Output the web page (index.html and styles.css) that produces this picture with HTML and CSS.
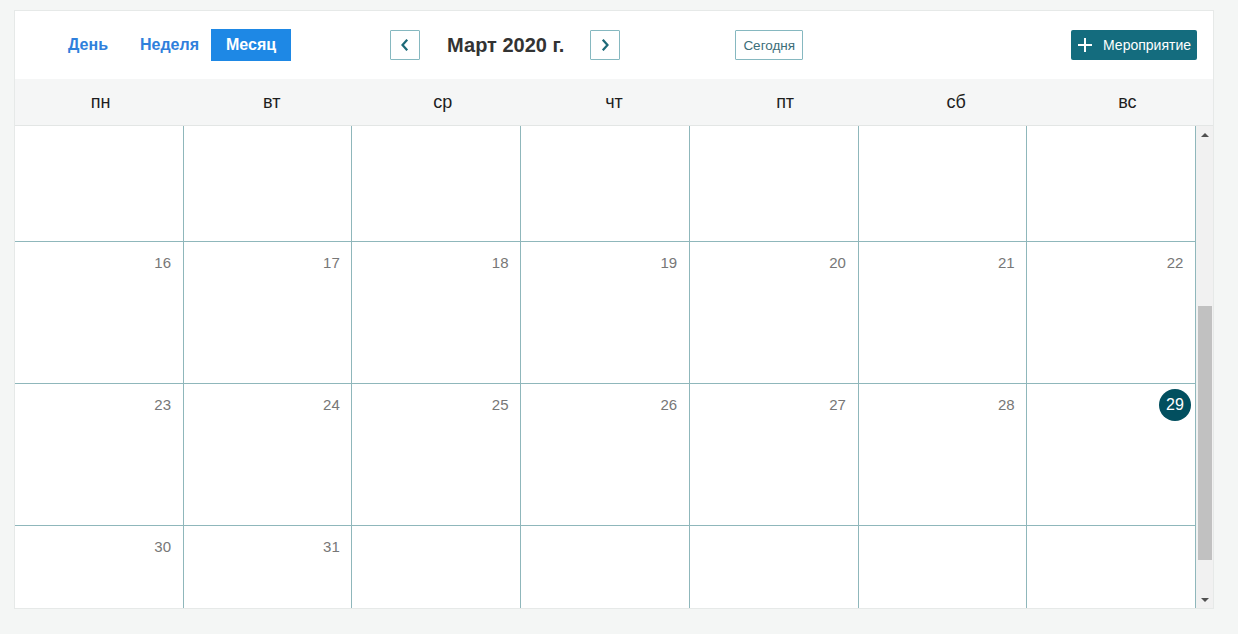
FILE: index.html
```html
<!DOCTYPE html>
<html lang="ru">
<head>
<meta charset="utf-8">
<title>Календарь</title>
<link rel="stylesheet" href="styles.css">
</head>
<body>
<div class="calendar">
  <div class="toolbar">
    <div class="views">
      <a class="view">День</a>
      <a class="view view-week">Неделя</a>
      <a class="view active">Месяц</a>
    </div>
    <div class="nav">
      <button class="nav-btn" aria-label="Назад">
        <svg width="12" height="12" viewBox="0 0 12 12"><path d="M7.5 1.5 L3.5 6 L7.5 10.5" fill="none" stroke="#1d6a78" stroke-width="2.2" stroke-linecap="square"/></svg>
      </button>
      <h2 class="title">Март 2020 г.</h2>
      <button class="nav-btn" aria-label="Вперёд">
        <svg width="12" height="12" viewBox="0 0 12 12"><path d="M4.5 1.5 L8.5 6 L4.5 10.5" fill="none" stroke="#1d6a78" stroke-width="2.2" stroke-linecap="square"/></svg>
      </button>
    </div>
    <button class="today-btn">Сегодня</button>
    <button class="add-btn">
      <svg width="14" height="14" viewBox="0 0 14 14"><path d="M7 0 V14 M0 7 H14" stroke="#fff" stroke-width="2"/></svg>
      <span>Мероприятие</span>
    </button>
  </div>
  <div class="weekdays">
    <div>пн</div><div>вт</div><div>ср</div><div>чт</div><div>пт</div><div>сб</div><div>вс</div>
  </div>
  <div class="body">
    <div class="weeks" id="weeks">
      <div class="week">
        <div class="day"></div><div class="day"></div><div class="day"></div><div class="day"></div><div class="day"></div><div class="day"></div><div class="day"><span class="num">1</span></div>
      </div>
      <div class="week">
        <div class="day"><span class="num">2</span></div><div class="day"><span class="num">3</span></div><div class="day"><span class="num">4</span></div><div class="day"><span class="num">5</span></div><div class="day"><span class="num">6</span></div><div class="day"><span class="num">7</span></div><div class="day"><span class="num">8</span></div>
      </div>
      <div class="week">
        <div class="day"><span class="num">9</span></div><div class="day"><span class="num">10</span></div><div class="day"><span class="num">11</span></div><div class="day"><span class="num">12</span></div><div class="day"><span class="num">13</span></div><div class="day"><span class="num">14</span></div><div class="day"><span class="num">15</span></div>
      </div>
      <div class="week">
        <div class="day"><span class="num">16</span></div><div class="day"><span class="num">17</span></div><div class="day"><span class="num">18</span></div><div class="day"><span class="num">19</span></div><div class="day"><span class="num">20</span></div><div class="day"><span class="num">21</span></div><div class="day"><span class="num">22</span></div>
      </div>
      <div class="week">
        <div class="day"><span class="num">23</span></div><div class="day"><span class="num">24</span></div><div class="day"><span class="num">25</span></div><div class="day"><span class="num">26</span></div><div class="day"><span class="num">27</span></div><div class="day"><span class="num">28</span></div><div class="day"><span class="num today">29</span></div>
      </div>
      <div class="week">
        <div class="day"><span class="num">30</span></div><div class="day"><span class="num">31</span></div><div class="day"></div><div class="day"></div><div class="day"></div><div class="day"></div><div class="day"></div>
      </div>
    </div>
    <div class="scrollbar">
      <div class="sb-btn"><span class="arrow-up"></span></div>
      <div class="sb-track">
        <div class="sb-thumb"></div>
      </div>
      <div class="sb-btn"><span class="arrow-down"></span></div>
    </div>
  </div>
</div>
<script src="script.js"></script>
</body>
</html>
```

FILE: styles.css
```css
* { box-sizing: border-box; }

html, body {
  margin: 0;
  padding: 0;
  background: #f4f6f5;
}

body {
  padding: 10px 0 0 14px;
  font-family: "Liberation Sans", Arial, sans-serif;
}

.calendar {
  width: 1200px;
  height: 599px;
  background: #fff;
  border: 1px solid #e6e9e8;
  display: flex;
  flex-direction: column;
}

/* toolbar */
.toolbar {
  height: 68px;
  flex: none;
  display: flex;
  align-items: center;
  padding: 0 16px 0 41px;
}

.views {
  display: flex;
  align-items: center;
}

.view {
  display: block;
  height: 32px;
  line-height: 32px;
  padding: 0 12px;
  font-size: 16px;
  font-weight: bold;
  color: #2f80dc;
  cursor: pointer;
}

.view-week {
  margin-left: 8px;
}

.view.active {
  background: #1e88e5;
  color: #fff;
  padding: 0 15px;
}

.nav {
  display: flex;
  align-items: center;
  margin-left: 99px;
}

.nav-btn {
  width: 30px;
  height: 30px;
  padding: 0;
  margin: 0;
  border: 1px solid #86b8c0;
  border-radius: 1px;
  background: #fff;
  display: flex;
  align-items: center;
  justify-content: center;
}

.title {
  margin: 0 26px 0 27px;
  font-size: 20px;
  font-weight: bold;
  color: #333;
  line-height: 30px;
}

.today-btn {
  margin-left: 115px;
  height: 30px;
  padding: 0 7px;
  border: 1px solid #86b8c0;
  border-radius: 1px;
  background: #fff;
  color: #3c6e79;
  font-family: "Liberation Sans", Arial, sans-serif;
  font-size: 13.5px;
}

.add-btn {
  margin-left: auto;
  height: 30px;
  padding: 0 6px 0 7px;
  border: none;
  border-radius: 2px;
  background: #146c7e;
  color: #fff;
  font-family: "Liberation Sans", Arial, sans-serif;
  font-size: 14px;
  display: flex;
  align-items: center;
  gap: 11px;
}

/* weekday header */
.weekdays {
  flex: none;
  height: 47px;
  display: grid;
  grid-template-columns: repeat(7, 1fr);
  align-items: center;
  text-align: center;
  background: #f5f6f6;
  border-bottom: 1px solid #e3e6e5;
  font-size: 18px;
  color: #1e1e1e;
}

/* body with weeks + scrollbar */
.body {
  flex: 1;
  min-height: 0;
  display: flex;
}

.weeks {
  flex: 1;
  min-width: 0;
  overflow: hidden;
}

.week {
  display: grid;
  grid-template-columns: repeat(7, 1fr);
  height: 142px;
}

.day {
  border-right: 1px solid #8fb7bb;
  border-bottom: 1px solid #8fb7bb;
  display: flex;
  justify-content: flex-end;
  align-items: flex-start;
  padding: 5px 4px 0 0;
}

.num {
  width: 32px;
  height: 32px;
  line-height: 32px;
  text-align: center;
  border-radius: 50%;
  font-size: 15px;
  color: #777;
}

.num.today {
  background: #024f5f;
  color: #fff;
  font-size: 16px;
}

/* drawn scrollbar */
.scrollbar {
  width: 17px;
  flex: none;
  background: #f1f1f1;
  display: flex;
  flex-direction: column;
}

.sb-btn {
  height: 17px;
  flex: none;
  display: flex;
  align-items: center;
  justify-content: center;
}

.arrow-up {
  width: 0;
  height: 0;
  border-left: 4px solid transparent;
  border-right: 4px solid transparent;
  border-bottom: 4px solid #505050;
}

.arrow-down {
  width: 0;
  height: 0;
  border-left: 4px solid transparent;
  border-right: 4px solid transparent;
  border-top: 4px solid #505050;
}

.sb-track {
  flex: 1;
  padding: 163px 1px 0 2px;
}

.sb-thumb {
  height: 254px;
  background: #c1c1c1;
}
```

FILE: script.js
```js
document.getElementById('weeks').scrollTop = 310;
```
